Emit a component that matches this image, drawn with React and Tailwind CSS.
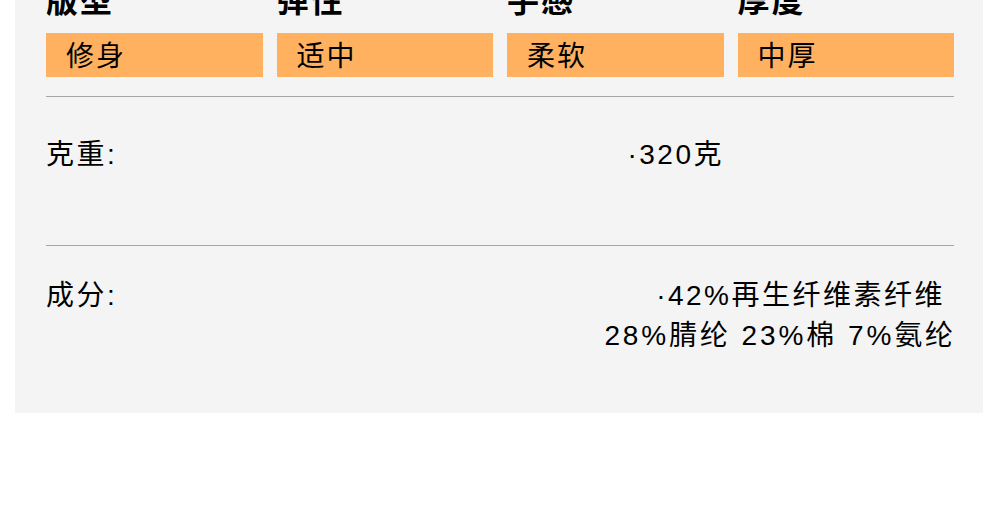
const FONT = { fontFamily: '"Liberation Sans", "Noto Sans CJK SC", sans-serif' };

const SPECS = [
  { label: '版型', value: '修身' },
  { label: '弹性', value: '适中' },
  { label: '手感', value: '柔软' },
  { label: '厚度', value: '中厚' },
];

export default function App() {
  return (
    <div className="w-[1000px] h-[511px] bg-white overflow-hidden text-black" style={FONT}>
      <div className="ml-[15px] w-[968px] bg-[#f4f4f4] pl-[31px] pr-[29px] pb-[57px]">
        {/* spec headers, top clipped by the viewport */}
        <div className="grid grid-cols-4 gap-x-[14px] -mt-[15px]">
          {SPECS.map(s => (
            <div key={s.label}>
              <div className="h-[32px] text-[32px] leading-[32px] font-bold tracking-[2px]">{s.label}</div>
              <div className="mt-[16px] h-[44px] bg-[#ffb15f] pl-[20px] pt-[3px] flex items-center text-[28px] tracking-[2px]">
                {s.value}
              </div>
            </div>
          ))}
        </div>

        <div className="mt-[19px] h-px bg-[#a6a6a6]" />

        {/* weight */}
        <div className="pt-[44px] h-[148px] flex text-[28px] leading-[28px] tracking-[2.5px]">
          <div>克重:</div>
          <div className="ml-auto mr-[230px]">·320克</div>
        </div>

        <div className="h-px bg-[#a6a6a6]" />

        {/* composition */}
        <div className="pt-[30px] flex text-[28px] leading-[40px] tracking-[2.5px]">
          <div>成分:</div>
          <div className="ml-auto text-right">
            <div className="pr-[9px]">·42%再生纤维素纤维</div>
            <div className="-mr-[2px] tracking-[2.9px]">28%腈纶 23%棉 7%氨纶</div>
          </div>
        </div>
      </div>
    </div>
  );
}
